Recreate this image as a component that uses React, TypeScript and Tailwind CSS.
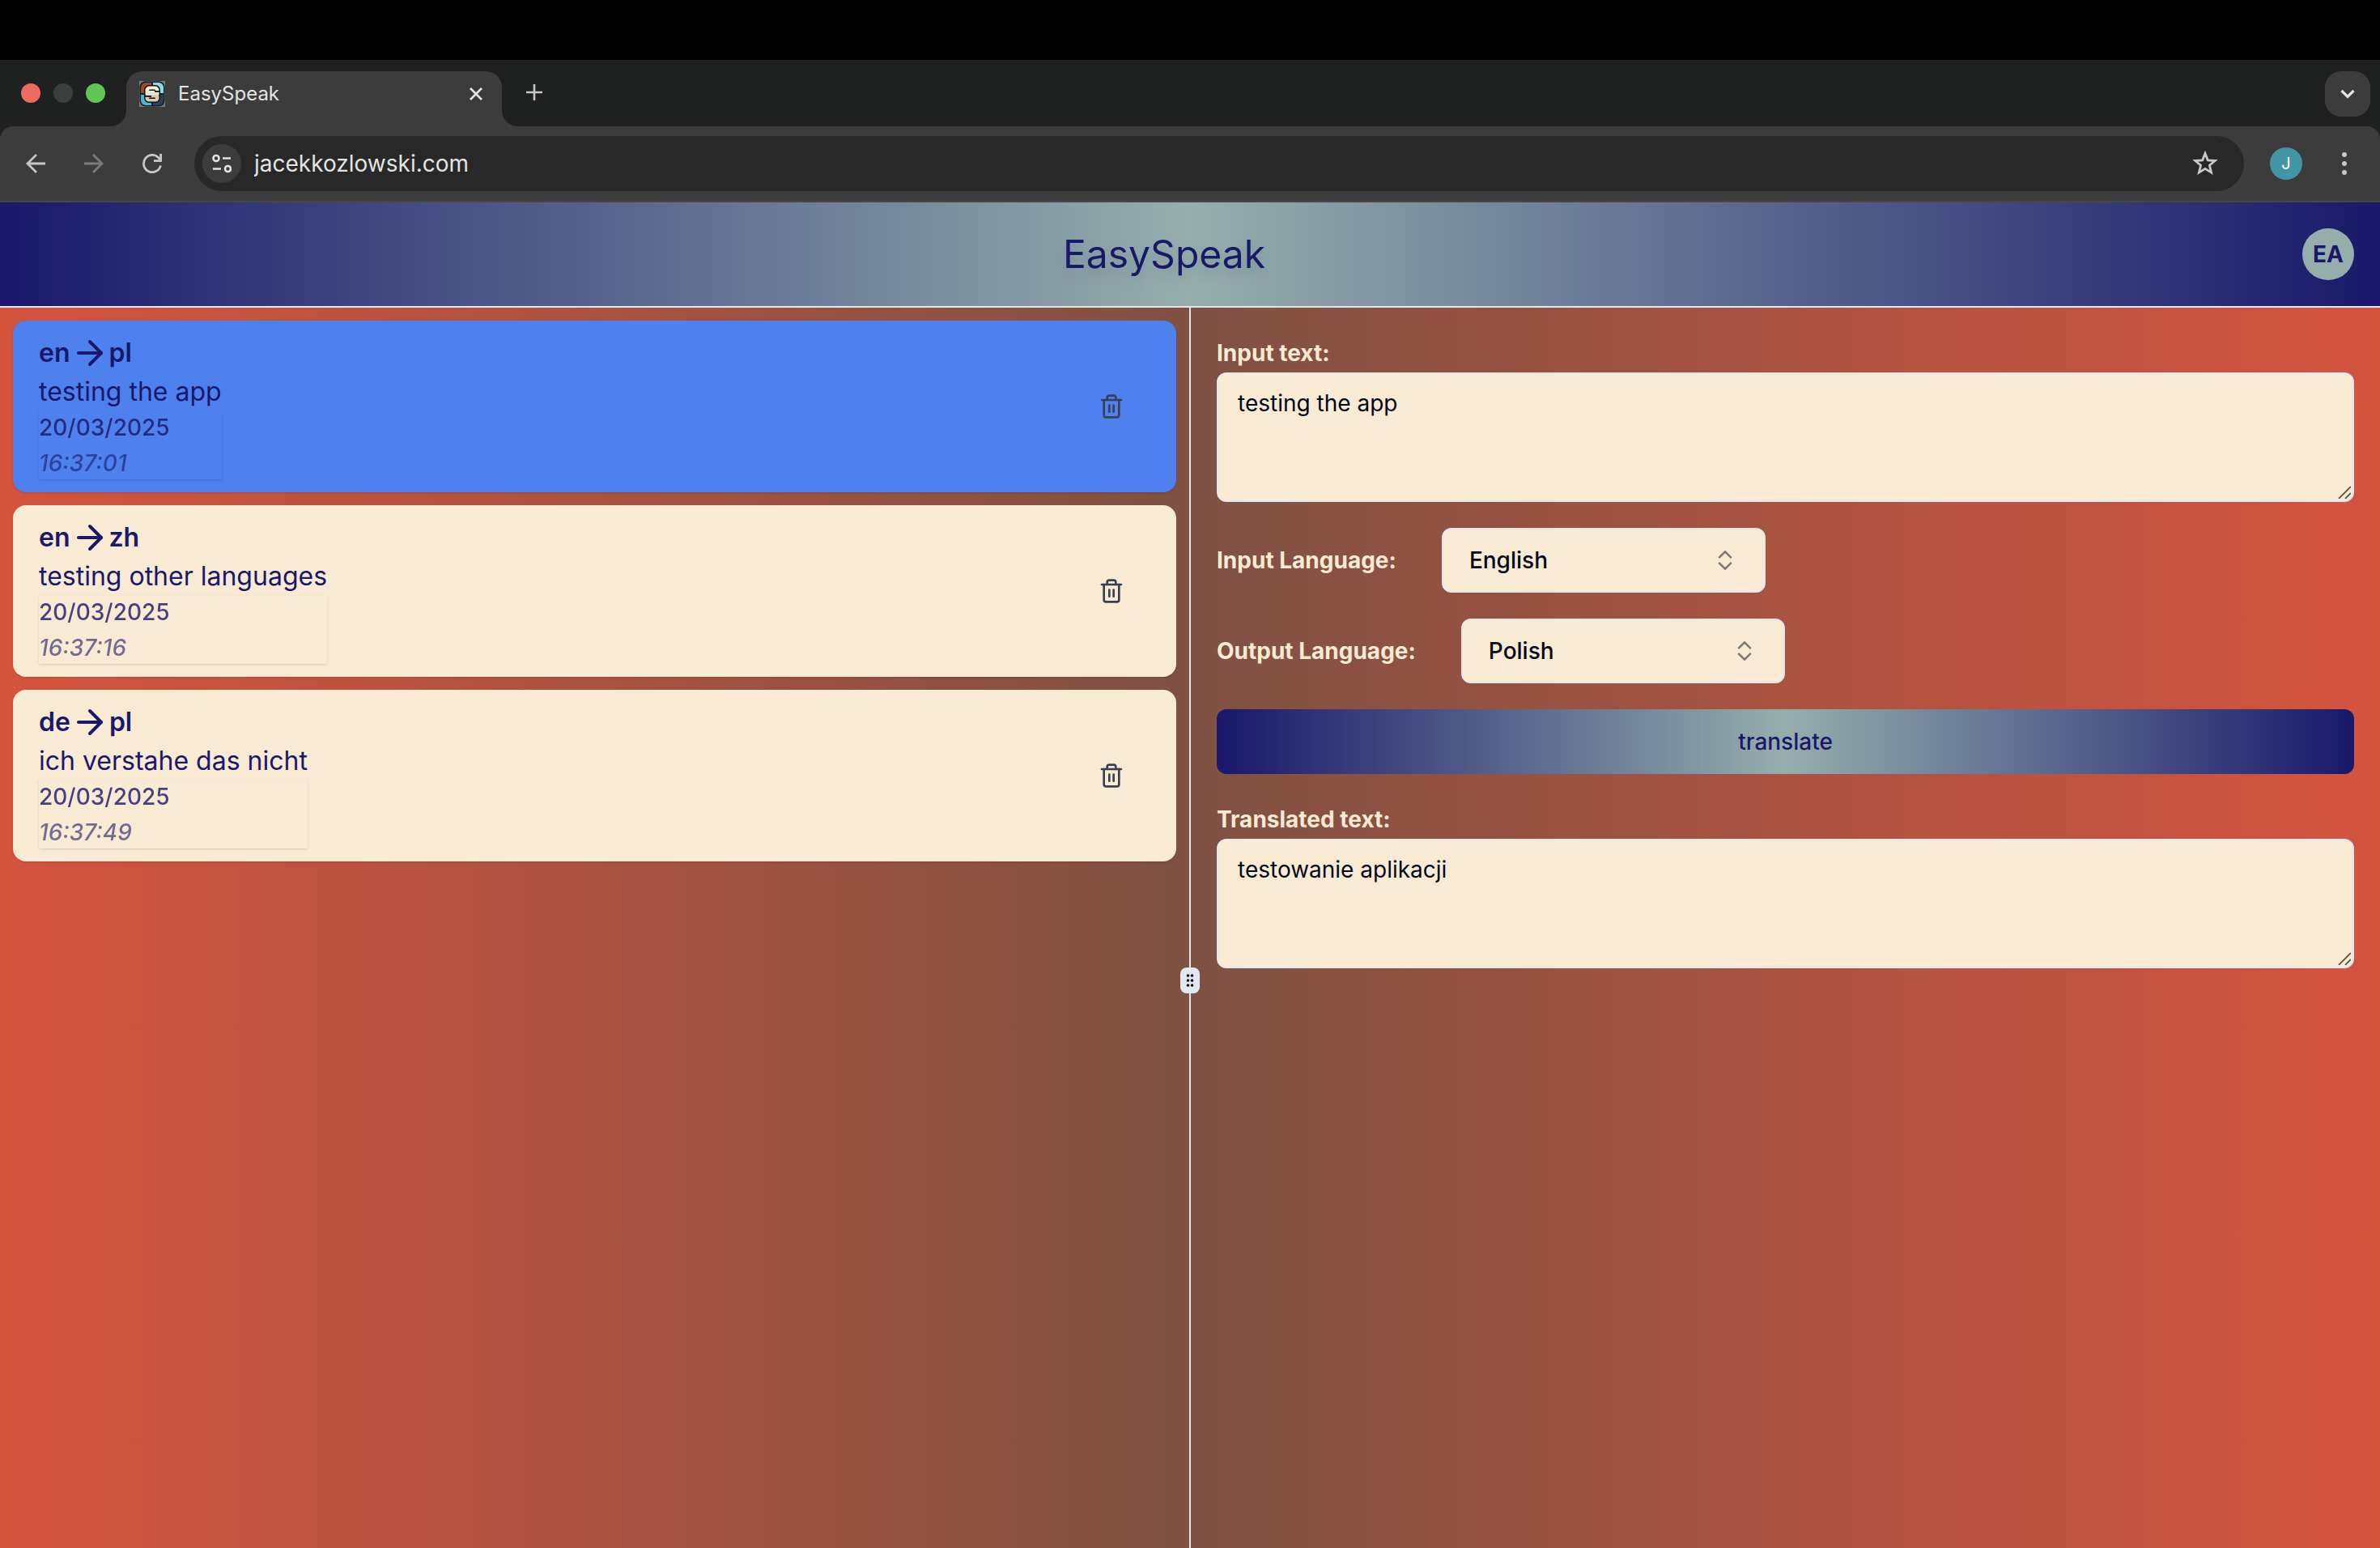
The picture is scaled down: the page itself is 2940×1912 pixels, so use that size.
import React from "react";
import { ArrowRight, Trash2 } from "lucide-react";

type Entry = { from: string; to: string; text: string; date: string; time: string; active?: boolean };

const entries: Entry[] = [
  { from: "en", to: "pl", text: "testing the app", date: "20/03/2025", time: "16:37:01", active: true },
  { from: "en", to: "zh", text: "testing other languages", date: "20/03/2025", time: "16:37:16" },
  { from: "de", to: "pl", text: "ich verstahe das nicht", date: "20/03/2025", time: "16:37:49" },
];

function Favicon() {
  return (
    <svg className="size-8" viewBox="0 0 32 32" aria-hidden="true">
      <rect width="32" height="32" fill="#6f7f80" />
      <rect x="0.500" y="0.500" width="31" height="31" rx="7" fill="#10202c" />
      <path d="M2 15V8a6 6 0 0 1 6-6h7v13z" fill="#9c4a25" />
      <path d="M17 2h7a6 6 0 0 1 6 6v7H17z" fill="#86dfe2" />
      <path d="M2 17h13v13H8a6 6 0 0 1-6-6z" fill="#4fb3cf" />
      <path d="M17 17h13v7a6 6 0 0 1-6 6h-7z" fill="#2c4250" />
      <rect x="6" y="5" width="20" height="22" rx="6" fill="#10141c" />
      <rect x="7.500" y="6.500" width="17" height="11" rx="5" fill="#f7efd9" />
      <rect x="7.500" y="15" width="17" height="10.500" rx="4.500" fill="#d5cbb4" />
      <rect x="7.500" y="13.500" width="17" height="4" rx="1" fill="#ece3cb" />
      <rect x="12" y="10.500" width="8" height="1.600" rx="0.800" fill="#10141c" />
      <rect x="19" y="12" width="7" height="1.800" fill="#10141c" />
      <rect x="12" y="20.500" width="8" height="1.600" rx="0.800" fill="#10141c" />
      <rect x="6" y="18" width="9" height="1.800" fill="#10141c" />
    </svg>
  );
}

function TabFlare({ side }: { side: "left" | "right" }) {
  return (
    <svg className="size-5 self-end" viewBox="0 0 20 20" aria-hidden="true">
      <path d={side === "left" ? "M20 0v20H0A20 20 0 0 0 20 0z" : "M0 0v20h20A20 20 0 0 1 0 0z"} fill="#3c3c3c" />
    </svg>
  );
}

function BrowserChrome() {
  return (
    <div className="bg-[#1f2121]">
      <div className="h-[74px] bg-black" />
      <div className="flex h-[82px] items-stretch pr-3 pt-[14px]">
        <div className="flex w-[136px] items-center gap-4 pb-[14px] pl-[26px]">
          <span className="size-6 rounded-full bg-[#ed6a5e]" />
          <span className="size-6 rounded-full bg-[#3d3f3f]" />
          <span className="size-6 rounded-full bg-[#61c554]" />
        </div>
        <TabFlare side="left" />
        <div className="flex w-[464px] items-center rounded-t-[20px] bg-[#3c3c3c] pb-3 pl-4 pr-5">
          <Favicon />
          <span className="ml-4 flex-1 text-2xl text-[#e3e3e3]">EasySpeak</span>
          <button type="button" aria-label="Close tab" className="flex size-6 items-center justify-center">
            <svg className="size-4" viewBox="0 0 16 16" fill="none" stroke="#e3e3e3" strokeWidth="2.6" aria-hidden="true">
              <path d="M1 1l14 14M15 1L1 15" />
            </svg>
          </button>
        </div>
        <TabFlare side="right" />
        <button type="button" aria-label="New tab" className="mb-4 flex w-10 items-center justify-center">
          <svg className="size-5" viewBox="0 0 20 20" fill="none" stroke="#c7c7c7" strokeWidth="2.6" aria-hidden="true">
            <path d="M10 0v20M0 10h20" />
          </svg>
        </button>
        <button type="button" aria-label="Search tabs" className="ml-auto flex size-14 items-center justify-center rounded-[20px] bg-[#3c3c3c]">
          <svg className="h-3 w-[18px]" viewBox="0 0 18 12" fill="none" stroke="#e3e3e3" strokeWidth="3.2" aria-hidden="true">
            <path d="M1.500 2l7.500 7.500 7.500-7.500" />
          </svg>
        </button>
      </div>
      <div className="flex h-[94px] items-center rounded-t-[16px] border-b-2 border-[#474747] bg-[#3c3c3c] pl-8 pr-8">
        <button type="button" aria-label="Back" className="mr-12 size-6">
          <svg className="size-6" viewBox="0 0 24 24" fill="none" stroke="#c7c7c7" strokeWidth="2.8" aria-hidden="true">
            <path d="M24 12H2M13 1L2 12l11 11" />
          </svg>
        </button>
        <button type="button" aria-label="Forward" className="mr-12 size-6">
          <svg className="size-6" viewBox="0 0 24 24" fill="none" stroke="#7b7b7b" strokeWidth="2.8" aria-hidden="true">
            <path d="M0 12h22M11 1l11 11-11 11" />
          </svg>
        </button>
        <button type="button" aria-label="Reload" className="mr-10 size-6">
          <svg className="size-6" viewBox="0 0 24 24" fill="none" stroke="#c7c7c7" strokeWidth="2.8" aria-hidden="true">
            <path d="M22.400 14.500A10.600 10.600 0 1 1 19.800 4.800L22.500 7.700" />
            <path d="M22.600 0v8.600H14" />
          </svg>
        </button>
        <div className="flex h-[68px] flex-1 items-center rounded-full bg-[#282828] pl-[10px] pr-8">
          <button type="button" aria-label="Site information" className="flex size-12 items-center justify-center rounded-full bg-[#3c3c3c]">
            <svg className="size-6" viewBox="0 0 24 24" fill="none" stroke="#e3e3e3" strokeWidth="2.600" aria-hidden="true">
              <circle cx="5" cy="5.500" r="3.500" />
              <path d="M13 5.500h10M1 18.500h10" />
              <circle cx="19.500" cy="18.500" r="3.500" />
            </svg>
          </button>
          <input
            aria-label="Address"
            defaultValue="jacekkozlowski.com"
            className="ml-4 min-w-0 flex-1 bg-transparent text-[28px] leading-10 text-[#e3e3e3] outline-none"
          />
          <button type="button" aria-label="Bookmark this page" className="size-8">
            <svg className="size-8" viewBox="0 0 32 32" fill="none" stroke="#c7c7c7" strokeWidth="2.800" aria-hidden="true">
              <path d="M16 3.500l3.300 8.300 9 .7-6.900 5.800 2.200 8.800L16 22.400l-7.600 4.700 2.200-8.800-6.900-5.800 9-.7z" />
            </svg>
          </button>
        </div>
        <button type="button" aria-label="Profile" className="ml-8 size-10 rounded-full bg-[#4295a7] text-xl text-white">
          J
        </button>
        <button type="button" aria-label="Menu" className="ml-10 flex w-6 justify-center">
          <svg className="h-7 w-2" viewBox="0 0 8 28" fill="#c7c7c7" aria-hidden="true">
            <circle cx="4" cy="3" r="3" />
            <circle cx="4" cy="14" r="3" />
            <circle cx="4" cy="25" r="3" />
          </svg>
        </button>
      </div>
    </div>
  );
}

function Header() {
  return (
    <header className="flex h-[130px] items-center border-b-2 border-[#e2e8f0] bg-[linear-gradient(to_right,#19186b,#95aeac,#19186b)] px-8">
      <h1 className="flex-1 text-center text-5xl text-[#19186b] drop-shadow-xl">EasySpeak</h1>
      <button type="button" className="size-16 rounded-full bg-[#95aeac] text-[28px] font-bold text-[#19186b]">
        EA
      </button>
    </header>
  );
}

function HistoryCard({ entry }: { entry: Entry }) {
  return (
    <li
      className={
        entry.active
          ? "flex items-center justify-between rounded-2xl bg-[#4e80ee] py-4 pl-8 pr-16 text-[#19186b] shadow-sm"
          : "flex items-center justify-between rounded-2xl bg-[#f9ead4] py-4 pl-8 pr-16 text-[#19186b] shadow-sm"
      }
    >
      <div>
        <div className="flex h-12 items-center text-[32px] font-semibold">
          {entry.from}
          <ArrowRight className="size-12" aria-hidden="true" />
          {entry.to}
        </div>
        <p className="text-[32px] leading-12">{entry.text}</p>
        <div className="flex flex-col gap-1 text-[28px] font-medium leading-10 shadow-sm">
          <span className="opacity-80">{entry.date}</span>
          <span className="italic opacity-60">{entry.time}</span>
        </div>
      </div>
      <button type="button" aria-label="Delete entry" className="size-8 text-[#374151]">
        <Trash2 className="size-8" aria-hidden="true" />
      </button>
    </li>
  );
}

function LanguageSelect({ id, label, value }: { id: string; label: string; value: string }) {
  return (
    <div className="mt-8 flex items-center gap-14">
      <label htmlFor={id} className="text-[28px] font-bold text-[#f9ead4]">
        {label}
      </label>
      <div className="grid items-center">
        <select
          id={id}
          defaultValue={value}
          className="col-start-1 row-start-1 h-20 w-[400px] appearance-none rounded-xl border-2 border-[#e2e8f0] bg-[#f9ead4] px-8 text-[28px] font-medium text-[#020817]"
        >
          <option>English</option>
          <option>Polish</option>
          <option>German</option>
          <option>Chinese</option>
        </select>
        <svg
          className="pointer-events-none col-start-1 row-start-1 mr-10 h-6 w-5 justify-self-end"
          viewBox="0 0 20 24"
          fill="none"
          stroke="#020817"
          strokeOpacity="0.5"
          strokeWidth="2.600"
          strokeLinecap="round"
          strokeLinejoin="round"
          aria-hidden="true"
        >
          <path d="M3 8.300l7-7 7 7M3 15.700l7 7 7-7" />
        </svg>
      </div>
    </div>
  );
}

function TextBlock({ id, label, value }: { id: string; label: string; value: string }) {
  return (
    <div className="flex flex-col">
      <label htmlFor={id} className="text-[28px] font-bold leading-12 text-[#f9ead4]">
        {label}
      </label>
      <div className="grid">
        <textarea
          id={id}
          defaultValue={value}
          className="col-start-1 row-start-1 h-40 resize-none rounded-xl border-2 border-[#e2e8f0] bg-[#f9ead4] px-6 py-4 text-[28px] leading-10 text-[#020817] outline-none"
        />
        <svg
          className="pointer-events-none col-start-1 row-start-1 mb-1 mr-1 size-4 self-end justify-self-end"
          viewBox="0 0 16 16"
          fill="none"
          stroke="#5c5750"
          strokeWidth="1.800"
          aria-hidden="true"
        >
          <path d="M1 16L16 1M9 16l7-7" />
        </svg>
      </div>
    </div>
  );
}

export default function App() {
  return (
    <div className="flex min-h-screen flex-col font-['Inter',sans-serif]">
      <BrowserChrome />
      <Header />
      <main className="grid flex-1 grid-cols-[minmax(0,1fr)_2px_minmax(0,1fr)] bg-[linear-gradient(to_right,#d5543e,#7f5143,#d5543e)]">
        <section aria-label="History" className="p-4">
          <ul className="flex flex-col gap-4">
            {entries.map((entry) => (
              <HistoryCard key={entry.time} entry={entry} />
            ))}
          </ul>
        </section>
        <div className="relative bg-[#e2e8f0]">
          <div className="absolute left-1/2 top-[831px] flex h-8 w-6 -translate-x-1/2 -translate-y-1/2 items-center justify-center rounded-lg bg-[#e2e8f0]">
            <svg className="h-4 w-[10px]" viewBox="0 0 10 16" fill="#020817" aria-hidden="true">
              <circle cx="2.500" cy="2" r="1.800" />
              <circle cx="7.500" cy="2" r="1.800" />
              <circle cx="2.500" cy="8" r="1.800" />
              <circle cx="7.500" cy="8" r="1.800" />
              <circle cx="2.500" cy="14" r="1.800" />
              <circle cx="7.500" cy="14" r="1.800" />
            </svg>
          </div>
        </div>
        <section aria-label="Translator" className="p-8">
          <TextBlock id="input-text" label="Input text:" value="testing the app" />
          <LanguageSelect id="input-language" label="Input Language:" value="English" />
          <LanguageSelect id="output-language" label="Output Language:" value="Polish" />
          <button
            type="button"
            className="mb-8 mt-8 h-20 w-full rounded-xl bg-[linear-gradient(to_right,#19186b,#95aeac,#19186b)] text-[28px] font-medium text-[#19186b]"
          >
            translate
          </button>
          <TextBlock id="translated-text" label="Translated text:" value="testowanie aplikacji" />
        </section>
      </main>
    </div>
  );
}
